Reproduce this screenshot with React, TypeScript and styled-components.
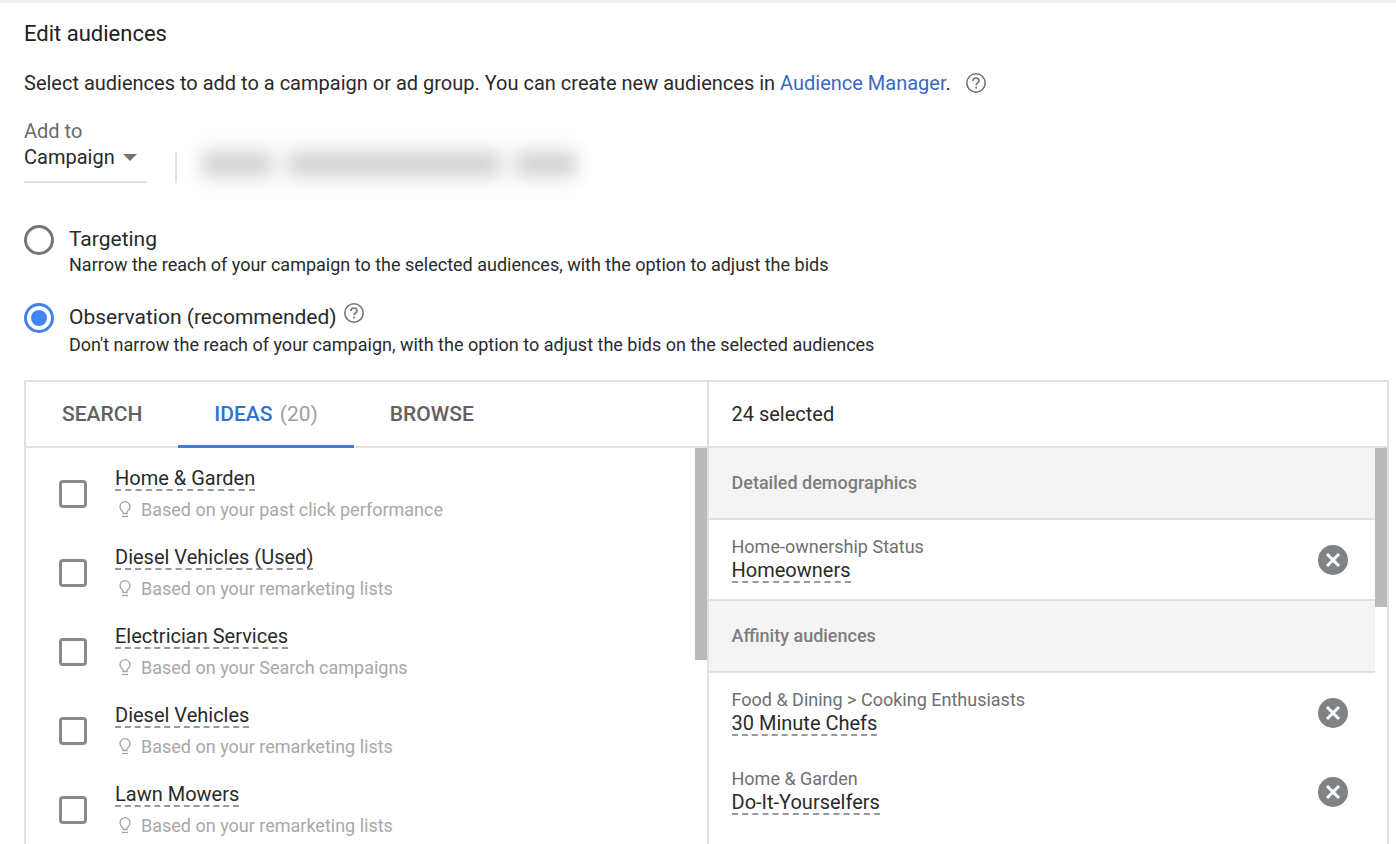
import React, { useState } from 'react';
import styled, { createGlobalStyle } from 'styled-components';

const GlobalStyle = createGlobalStyle`
  *, *::before, *::after { box-sizing: border-box; }
  body {
    margin: 0;
    background: #fff;
    color: #2a2a2a;
    font-family: Roboto, "Liberation Sans", sans-serif;
    font-size: 20px;
  }
  button, select, input { font: inherit; color: inherit; margin: 0; }
`;

const Page = styled.main`
  min-height: 100vh;
  display: flex;
  flex-direction: column;
  padding: 18px 7px 0 24px;
  border-top: 3px solid #f0f0f0;
`;

const Title = styled.h1`
  margin: 0;
  color: #212121;
  font-size: 22px;
  line-height: 26px;
  font-weight: 400;
`;

const Intro = styled.div`
  display: flex;
  align-items: center;
  gap: 15px;
  margin-top: 24px;
  line-height: 24px;
`;

const IntroText = styled.p`
  margin: 0;
`;

const Link = styled.a`
  color: #3b68c4;
  text-decoration: none;
`;

const HelpButton = styled.button`
  display: flex;
  padding: 0;
  border: 0;
  background: none;
  color: #757575;
  cursor: pointer;
`;

const Scope = styled.div`
  display: flex;
  align-items: flex-end;
  margin-top: 24px;
`;

const ScopeField = styled.div`
  display: flex;
  flex-direction: column;
  width: 123px;
  border-bottom: 2px solid #e0e0e0;
`;

const ScopeLabel = styled.label`
  color: #6b6b6b;
  line-height: 24px;
`;

const SelectWrap = styled.div`
  display: grid;
  align-items: center;
  padding-bottom: 10px;

  > * { grid-area: 1 / 1; }
  > svg { justify-self: end; margin-right: 10px; pointer-events: none; }
`;

const Select = styled.select`
  appearance: none;
  width: 100%;
  height: 28px;
  padding: 0;
  border: 0;
  background: transparent;
`;

const Divider = styled.div`
  width: 2px;
  height: 31px;
  margin: 0 22px 0 28px;
  background: #e0e0e0;
`;

const Redacted = styled.div`
  display: flex;
  gap: 22px;
  width: 380px;
  height: 38px;
  padding: 8px 4px;
  background: #f3f3f3;
  filter: blur(8px);
`;

const RedactedWord = styled.span<{ $grow: number }>`
  flex: ${(p) => p.$grow} 1 0;
  background: #d4d4d4;
`;

const Modes = styled.fieldset`
  display: flex;
  flex-direction: column;
  gap: 26px;
  margin: 42px 0 0;
  padding: 0;
  border: 0;
`;

const Mode = styled.div`
  display: flex;
  gap: 15px;
`;

const Radio = styled.input`
  appearance: none;
  flex: none;
  display: grid;
  place-items: center;
  width: 30px;
  height: 30px;
  border: 3px solid #757575;
  border-radius: 50%;

  &:checked { border-color: #4580e6; }
  &:checked::before {
    content: "";
    width: 16px;
    height: 16px;
    border-radius: 50%;
    background: #4285f4;
  }
`;

const ModeHeading = styled.div`
  display: flex;
  gap: 7px;
  font-size: 21px;
  line-height: 28px;

  &:has(button) { padding-bottom: 2px; }
`;

const ModeNote = styled.p`
  margin: 0;
  font-size: 18px;
  line-height: 24px;
`;

const Panel = styled.section`
  flex: 1;
  display: grid;
  grid-template-columns: 1fr 1fr;
  margin-top: 23px;
  border: 2px solid #e0e0e0;
  border-bottom: 0;
`;

const Column = styled.div`
  display: flex;
  flex-direction: column;
  min-width: 0;

  & + & { border-left: 2px solid #e0e0e0; }
`;

const Bar = styled.div`
  display: flex;
  height: 66px;
  border-bottom: 2px solid #e0e0e0;
`;

const Tab = styled.button<{ $active?: boolean }>`
  height: 66px;
  padding: 0 36px;
  border: 0;
  border-bottom: 3px solid ${(p) => (p.$active ? '#4080d4' : 'transparent')};
  background: none;
  color: ${(p) => (p.$active ? '#2f72d4' : '#616161')};
  font-size: 21px;
  font-weight: 500;
  cursor: pointer;
`;

const TabCount = styled.span`
  margin-left: 2px;
  color: #9e9e9e;
  font-weight: 400;
`;

const SelectedCount = styled.h2`
  margin: 0;
  padding-left: 23px;
  font-size: 20px;
  font-weight: 400;
  line-height: 64px;
`;

const Scroller = styled.div`
  flex: 1;
  display: flex;
`;

const Thumb = styled.div<{ $length: number }>`
  flex: none;
  width: 12px;
  height: ${(p) => p.$length}px;
  background: #bababa;
`;

const IdeaList = styled.ul`
  flex: 1;
  display: flex;
  flex-direction: column;
  gap: 25px;
  margin: 0;
  padding: 19px 0 0 33px;
  list-style: none;
`;

const Idea = styled.li`
  display: flex;
  align-items: center;
  gap: 28px;
`;

const Checkbox = styled.input`
  appearance: none;
  flex: none;
  width: 28px;
  height: 28px;
  border: 3px solid #8a8a8a;
  border-radius: 4px;

  &:checked { background: #4285f4; border-color: #4285f4; }
`;

const IdeaBody = styled.div`
  display: flex;
  flex-direction: column;
  align-items: flex-start;
  gap: 8px;
`;

const Name = styled.label`
  line-height: 22px;
  border-bottom: 2px dashed #999;
`;

const Reason = styled.div`
  display: flex;
  align-items: center;
  gap: 10px;
  padding-left: 4px;
  color: #a8a8a8;
  font-size: 18px;
  line-height: 22px;

  > svg { margin-bottom: 2px; }
`;

const Groups = styled.div`
  flex: 1;
`;

const Group = styled.section`
  & + & { border-top: 2px solid #e0e0e0; }
`;

const GroupTitle = styled.h3`
  height: 72px;
  margin: 0;
  padding-left: 23px;
  border-bottom: 2px solid #e0e0e0;
  background: #f4f4f4;
  color: #7d7d7d;
  font-size: 18px;
  font-weight: 500;
  line-height: 70px;
`;

const Pick = styled.div`
  display: flex;
  align-items: center;
  justify-content: space-between;
  height: 79px;
  padding: 0 27px 0 23px;
`;

const PickBody = styled.div`
  display: flex;
  flex-direction: column;
  align-items: flex-start;
  padding-bottom: 2px;
`;

const PickPath = styled.span`
  color: #707070;
  font-size: 18px;
  line-height: 24px;
`;

const PickName = styled.span`
  line-height: 22px;
  border-bottom: 2px dashed #999;
`;

const RemoveButton = styled.button`
  display: flex;
  padding: 0;
  border: 0;
  border-radius: 50%;
  background: none;
  cursor: pointer;
`;

const HelpIcon = () => (
  <svg width="20" height="20" viewBox="0 0 20 20" fill="none" stroke="currentColor" aria-hidden="true">
    <circle cx="10" cy="10" r="9.200" strokeWidth="1.600" />
    <path
      d="M7 7.900C7 6.100 8.300 5 10 5S13 6.100 13 7.700C13 9.800 10.100 10 10.100 12.300"
      strokeWidth="1.700"
    />
    <path d="M10.100 13.700V15.500" strokeWidth="1.800" />
  </svg>
);

const BulbIcon = () => (
  <svg width="12" height="17" viewBox="0 0 12 17" fill="none" stroke="#a3a3a3" aria-hidden="true">
    <path
      d="M4 12.500V11.300C3.800 9.700 1 9 1 5.700A5 5 0 0 1 11 5.700C11 9 8.200 9.700 8 11.300V12.500Z"
      strokeWidth="1.300"
    />
    <path d="M3 15.500H9" strokeWidth="1.300" />
  </svg>
);

const RemoveIcon = () => (
  <svg width="30" height="30" viewBox="0 0 30 30" fill="none" aria-hidden="true">
    <circle cx="15" cy="15" r="15" fill="#7f8386" />
    <path d="M9 9L21 21M21 9L9 21" stroke="#fff" strokeWidth="3" />
  </svg>
);

const ideas = [
  { name: 'Home & Garden', reason: 'Based on your past click performance' },
  { name: 'Diesel Vehicles (Used)', reason: 'Based on your remarketing lists' },
  { name: 'Electrician Services', reason: 'Based on your Search campaigns' },
  { name: 'Diesel Vehicles', reason: 'Based on your remarketing lists' },
  { name: 'Lawn Mowers', reason: 'Based on your remarketing lists' },
];

const groups = [
  {
    title: 'Detailed demographics',
    picks: [{ path: 'Home-ownership Status', name: 'Homeowners' }],
  },
  {
    title: 'Affinity audiences',
    picks: [
      { path: 'Food & Dining > Cooking Enthusiasts', name: '30 Minute Chefs' },
      { path: 'Home & Garden', name: 'Do-It-Yourselfers' },
    ],
  },
];

export default function App() {
  const [mode, setMode] = useState('observation');

  return (
    <>
      <GlobalStyle />
      <Page>
        <Title>Edit audiences</Title>
        <Intro>
          <IntroText>
            Select audiences to add to a campaign or ad group. You can create new audiences in{' '}
            <Link href="#audience-manager">Audience Manager</Link>.
          </IntroText>
          <HelpButton type="button" aria-label="Help">
            <HelpIcon />
          </HelpButton>
        </Intro>

        <Scope>
          <ScopeField>
            <ScopeLabel htmlFor="scope">Add to</ScopeLabel>
            <SelectWrap>
              <Select id="scope" defaultValue="Campaign">
                <option>Campaign</option>
                <option>Ad group</option>
              </Select>
              <svg width="14" height="7" viewBox="0 0 14 7" aria-hidden="true">
                <path d="M0 0H14L7 7Z" fill="#757575" />
              </svg>
            </SelectWrap>
          </ScopeField>
          <Divider />
          <Redacted aria-hidden="true">
            <RedactedWord $grow={65} />
            <RedactedWord $grow={205} />
            <RedactedWord $grow={55} />
          </Redacted>
        </Scope>

        <Modes>
          <Mode>
            <Radio
              type="radio"
              id="targeting"
              name="mode"
              checked={mode === 'targeting'}
              onChange={() => setMode('targeting')}
            />
            <div>
              <ModeHeading>
                <label htmlFor="targeting">Targeting</label>
              </ModeHeading>
              <ModeNote>
                Narrow the reach of your campaign to the selected audiences, with the option to adjust the bids
              </ModeNote>
            </div>
          </Mode>
          <Mode>
            <Radio
              type="radio"
              id="observation"
              name="mode"
              checked={mode === 'observation'}
              onChange={() => setMode('observation')}
            />
            <div>
              <ModeHeading>
                <label htmlFor="observation">Observation (recommended)</label>
                <HelpButton type="button" aria-label="Help about observation">
                  <HelpIcon />
                </HelpButton>
              </ModeHeading>
              <ModeNote>
                Don't narrow the reach of your campaign, with the option to adjust the bids on the selected audiences
              </ModeNote>
            </div>
          </Mode>
        </Modes>

        <Panel>
          <Column>
            <Bar role="tablist">
              <Tab type="button" role="tab" aria-selected={false}>SEARCH</Tab>
              <Tab type="button" role="tab" aria-selected={true} $active>
                IDEAS <TabCount>(20)</TabCount>
              </Tab>
              <Tab type="button" role="tab" aria-selected={false}>BROWSE</Tab>
            </Bar>
            <Scroller>
              <IdeaList>
                {ideas.map((idea, i) => (
                  <Idea key={idea.name}>
                    <Checkbox type="checkbox" id={`idea-${i}`} />
                    <IdeaBody>
                      <Name htmlFor={`idea-${i}`}>{idea.name}</Name>
                      <Reason>
                        <BulbIcon />
                        {idea.reason}
                      </Reason>
                    </IdeaBody>
                  </Idea>
                ))}
              </IdeaList>
              <Thumb $length={212} />
            </Scroller>
          </Column>

          <Column>
            <Bar>
              <SelectedCount>24 selected</SelectedCount>
            </Bar>
            <Scroller>
              <Groups>
                {groups.map((group) => (
                  <Group key={group.title}>
                    <GroupTitle>{group.title}</GroupTitle>
                    {group.picks.map((pick) => (
                      <Pick key={pick.name}>
                        <PickBody>
                          <PickPath>{pick.path}</PickPath>
                          <PickName>{pick.name}</PickName>
                        </PickBody>
                        <RemoveButton type="button" aria-label={`Remove ${pick.name}`}>
                          <RemoveIcon />
                        </RemoveButton>
                      </Pick>
                    ))}
                  </Group>
                ))}
              </Groups>
              <Thumb $length={159} />
            </Scroller>
          </Column>
        </Panel>
      </Page>
    </>
  );
}
